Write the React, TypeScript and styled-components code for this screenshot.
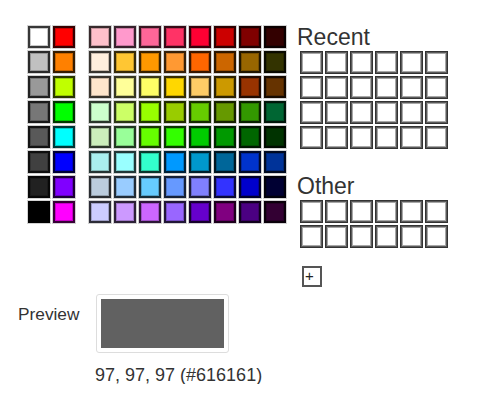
import React from 'react';
import styled, { createGlobalStyle } from 'styled-components';

const GlobalStyle = createGlobalStyle`
  body {
    margin: 0;
    background: #fff;
    font-family: "Liberation Sans", Arial, sans-serif;
    color: #333;
  }
`;

const grays = ['#FFFFFF', '#C0C0C0', '#999999', '#777777', '#595959', '#404040', '#212121', '#000000'];
const brights = ['#FF0000', '#FF8000', '#C0FF00', '#00FF00', '#00FFFF', '#0000FF', '#8000FF', '#FF00FF'];

const palette = [
  ['#FFC0CB', '#FF99CC', '#FF6699', '#FF3366', '#FF0033', '#CC0000', '#800000', '#330000'],
  ['#FFEEDD', '#FFC633', '#FF9900', '#FF9933', '#FF6600', '#CC6600', '#996600', '#333300'],
  ['#FFE5CC', '#FFFF99', '#FFFF66', '#FFD700', '#FFCC66', '#CC9900', '#993300', '#663300'],
  ['#CCFFCC', '#CCFF66', '#99FF00', '#99CC00', '#66CC00', '#669900', '#339900', '#006633'],
  ['#CCEEBB', '#99FF99', '#66FF00', '#33FF00', '#00CC00', '#009900', '#006600', '#003300'],
  ['#AAEEEE', '#99FFFF', '#33FFCC', '#0099FF', '#0099CC', '#006699', '#0033CC', '#003399'],
  ['#BBCCDD', '#99CCFF', '#66CCFF', '#6699FF', '#8080FF', '#3333FF', '#0000CC', '#000033'],
  ['#CCCCFF', '#CC99FF', '#CC66FF', '#9966FF', '#6600CC', '#800080', '#4B0082', '#330033'],
];

const Page = styled.div`
  padding: 25px 0 0 27px;
`;

const TopRow = styled.div`
  display: flex;
  align-items: flex-start;
`;

const Swatches = styled.div`
  display: flex;
  gap: 12px;
`;

const Grid = styled.div<{ cols: number }>`
  display: grid;
  grid-template-columns: repeat(${p => p.cols}, 24px);
  grid-auto-rows: 24px;
  gap: 1px;
`;

const Swatch = styled.div<{ color: string }>`
  box-sizing: border-box;
  width: 24px;
  height: 24px;
  border: 1px solid #d2d2d2;
  background: ${p => p.color};
  box-shadow: inset 0 0 0 2px rgba(0, 0, 0, 0.72), inset 0 0 0 3px rgba(0, 0, 0, 0.22);
`;

const Side = styled.div`
  margin-left: 10px;
  display: flex;
  flex-direction: column;
`;

const Heading = styled.div<{ top: number }>`
  font-size: 23px;
  line-height: 23px;
  color: #333;
  margin-top: ${p => p.top}px;
`;

const EmptyGrid = styled.div`
  display: grid;
  grid-template-columns: repeat(6, 23px);
  grid-auto-rows: 23px;
  gap: 2px;
  margin: 2px 0 0 3px;
`;

const EmptyCell = styled.div`
  box-sizing: border-box;
  border: 1px solid #333;
  background: #fff;
  box-shadow: inset 0 0 0 1px #5a5a5a, inset 0 0 0 2px #a8a8a8;
`;

const PlusButton = styled.div`
  box-sizing: border-box;
  width: 20px;
  height: 21px;
  margin: 18px 0 0 5px;
  border: 2px solid #555;
  background: #fff;
  font-size: 15px;
  line-height: 16px;
  padding-left: 1px;
  color: #222;
`;

const PreviewRow = styled.div`
  display: flex;
  align-items: flex-start;
  margin: 7px 0 0 -9px;
`;

const Label = styled.div`
  width: 78px;
  font-size: 17.3px;
  line-height: 20px;
  margin-top: 10px;
  color: #333;
`;

const PreviewFrame = styled.div`
  box-sizing: border-box;
  width: 133px;
  height: 59px;
  padding: 4px;
  border: 1px solid #ddd;
  border-radius: 3px;
`;

const PreviewFill = styled.div<{ color: string }>`
  width: 100%;
  height: 100%;
  background: ${p => p.color};
`;

const Value = styled.div`
  margin: 13px 0 0 68px;
  font-size: 18px;
  line-height: 18px;
  color: #333;
`;

const App: React.FC = () => {
  const left: string[] = [];
  grays.forEach((g, i) => {
    left.push(g, brights[i]);
  });
  return (
    <Page>
      <GlobalStyle />
      <TopRow>
        <Swatches>
          <Grid cols={2}>
            {left.map((c, i) => <Swatch key={i} color={c} />)}
          </Grid>
          <Grid cols={8}>
            {palette.flat().map((c, i) => <Swatch key={i} color={c} />)}
          </Grid>
        </Swatches>
        <Side>
          <Heading top={1}>Recent</Heading>
          <EmptyGrid>
            {Array.from({ length: 24 }).map((_, i) => <EmptyCell key={i} />)}
          </EmptyGrid>
          <Heading top={26}>Other</Heading>
          <EmptyGrid>
            {Array.from({ length: 12 }).map((_, i) => <EmptyCell key={i} />)}
          </EmptyGrid>
          <PlusButton>+</PlusButton>
        </Side>
      </TopRow>
      <PreviewRow>
        <Label>Preview</Label>
        <PreviewFrame>
          <PreviewFill color="#616161" />
        </PreviewFrame>
      </PreviewRow>
      <Value>97, 97, 97 (#616161)</Value>
    </Page>
  );
};

export default App;
